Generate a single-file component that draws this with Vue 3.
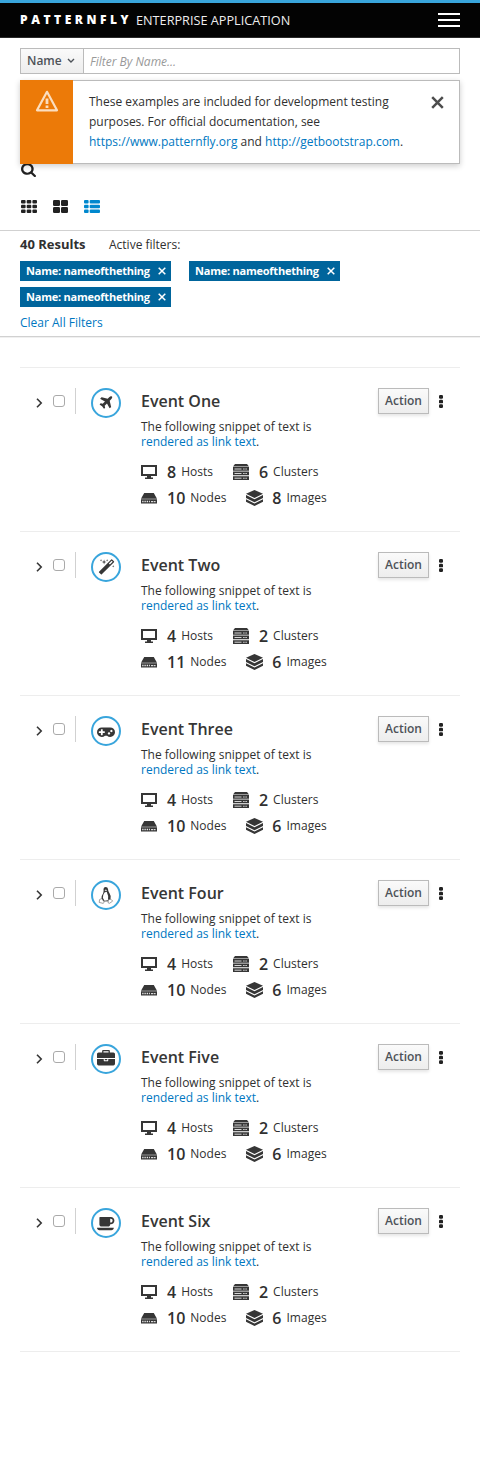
<script setup>
const plane = 'M1568 160q44 52 12 148t-108 172l-161 161 160 696q5 19-12 33l-128 96q-7 6-19 6-4 0-7-1-15-3-21-16l-279-508-259 259 53 194q5 17-8 31l-96 96q-9 9-23 9h-2q-15-2-24-13l-189-252-252-189q-11-7-13-23-1-13 9-25l96-97q9-9 23-9 6 0 8 1l194 53 259-259-508-279q-14-8-17-24-2-16 9-27l128-128q14-13 30-8l665 159 160-160q76-76 172-108t148 12z'
const magic = 'M1254 581l293-293-107-107-293 293zm447-293q0 27-18 45l-1286 1286q-18 18-45 18t-45-18l-198-198q-18-18-18-45t18-45l1286-1286q18-18 45-18t45 18l198 198q18 18 18 45zm-1351-190l98 30-98 30-30 98-30-98-98-30 98-30 30-98zm350 162l196 60-196 60-60 196-60-196-196-60 196-60 60-196zm930 478l98 30-98 30-30 98-30-98-98-30 98-30 30-98zm-640-640l98 30-98 30-30 98-30-98-98-30 98-30 30-98z'
const gamepad = 'M832 1088v-128q0-14-9-23t-23-9h-192v-192q0-14-9-23t-23-9h-128q-14 0-23 9t-9 23v192h-192q-14 0-23 9t-9 23v128q0 14 9 23t23 9h192v192q0 14 9 23t23 9h128q14 0 23-9t9-23v-192h192q14 0 23-9t9-23zm576 64q0-53-37.5-90.5t-90.5-37.5-90.5 37.5-37.5 90.5 37.5 90.5 90.5 37.5 90.5-37.5 37.5-90.5zm256-256q0-53-37.5-90.5t-90.5-37.5-90.5 37.5-37.5 90.5 37.5 90.5 90.5 37.5 90.5-37.5 37.5-90.5zm256 128q0 212-150 362t-362 150q-192 0-338-128h-220q-146 128-338 128-212 0-362-150t-150-362 150-362 362-150h896q212 0 362 150t150 362z'
const briefcase = 'M640 256h512v-128h-512v128zm1152 640v480q0 66-47 113t-113 47h-1472q-66 0-113-47t-47-113v-480h672v160q0 26 19 45t45 19h320q26 0 45-19t19-45v-160h672zm-768 0v128h-256v-128h256zm768-480v384h-1792v-384q0-66 47-113t113-47h352v-160q0-40 28-68t68-28h576q40 0 68 28t28 68v160h352q66 0 113 47t47 113z'
const coffee = 'M1664 640q0-80-56-136t-136-56h-64v384h64q80 0 136-56t56-136zm-1664 768h1792q0 106-75 181t-181 75h-1280q-106 0-181-75t-75-181zm1856-768q0 159-112.5 271.5t-271.5 112.5h-64v32q0 92-66 158t-158 66h-704q-92 0-158-66t-66-158v-736q0-26 19-45t45-19h1152q159 0 271.5 112.5t112.5 271.5z'

const events = [
  { name: 'Event One', path: plane, box: '0 0 1792 1792', w: 16, stats: [8, 6, 10, 8] },
  { name: 'Event Two', path: magic, box: '0 0 1792 1792', w: 17, stats: [4, 2, 11, 6] },
  { name: 'Event Three', path: gamepad, box: '0 0 1920 1792', w: 18, stats: [4, 2, 10, 6] },
  { name: 'Event Four', path: null, box: '0 0 18 18', w: 18, stats: [4, 2, 10, 6] },
  { name: 'Event Five', path: briefcase, box: '0 0 1792 1792', w: 18, stats: [4, 2, 10, 6] },
  { name: 'Event Six', path: coffee, box: '0 0 1920 1792', w: 18, stats: [4, 2, 10, 6] },
]
const filters = ['Name: nameofthething', 'Name: nameofthething', 'Name: nameofthething']
</script>

<template>
  <div class="page">
    <header class="navbar">
      <div class="brand"><b>PATTERNFLY</b><span>ENTERPRISE APPLICATION</span></div>
      <div class="burger"><i></i><i></i><i></i></div>
    </header>

    <section class="toolbar">
      <div class="filter">
        <div class="filter-type">Name
          <svg width="8" height="6" viewBox="0 0 8 6"><path d="M1 1l3 3 3-3" fill="none" stroke="#4d5258" stroke-width="1.4" /></svg>
        </div>
        <div class="filter-input">Filter By Name...</div>
      </div>
      <svg class="search" width="15" height="15" viewBox="64 0 1664 1792" preserveAspectRatio="none"><path fill="#222" d="M1216 832q0-185-131.500-316.500t-316.500-131.500-316.500 131.500-131.500 316.500 131.500 316.500 316.500 131.500 316.500-131.500 131.500-316.500zm512 832q0 52-38 90t-90 38q-54 0-90-38l-343-342q-179 124-399 124-143 0-273.500-55.500t-225-150-150-225-55.500-273.500 55.500-273.500 150-225 225-150 273.500-55.500 273.500 55.500 225 150 150 225 55.500 273.500q0 220-124 399l343 343q37 37 37 90z" /></svg>
      <div class="views">
        <svg width="16" height="13" viewBox="0 0 16 13" fill="#222">
          <template v-for="y in [0, 4.7, 9.4]" :key="y">
            <rect x="0" :y="y" width="4.600" height="3.600" rx="1" /><rect x="5.700" :y="y" width="4.600" height="3.600" rx="1" /><rect x="11.400" :y="y" width="4.600" height="3.600" rx="1" />
          </template>
        </svg>
        <svg width="15" height="13" viewBox="0 0 15 13" fill="#222">
          <rect width="7" height="6" rx="1.300" /><rect x="8" width="7" height="6" rx="1.300" /><rect y="7" width="7" height="6" rx="1.300" /><rect x="8" y="7" width="7" height="6" rx="1.300" />
        </svg>
        <svg width="16" height="13" viewBox="0 0 16 13" fill="#0088ce">
          <template v-for="y in [0, 4.7, 9.4]" :key="y">
            <rect x="0" :y="y" width="4.600" height="3.600" rx="1" /><rect x="5.700" :y="y" width="10.300" height="3.600" rx="1" />
          </template>
        </svg>
      </div>
      <div class="toast">
        <div class="toast-icon">
          <svg width="24" height="22" viewBox="0 0 24 22" fill="none" stroke="#fbdebf" stroke-width="2.200" stroke-linejoin="round">
            <path d="M12 1.800L22 20.300H2z" /><path d="M12 8.500v5.500M12 15.500v2.500" stroke-width="2.800" />
          </svg>
        </div>
        <p>These examples are included for development testing purposes. For official documentation, see <a>https://www.patternfly.org</a> and <a>http://getbootstrap.com</a>.</p>
        <svg class="close" width="13" height="13" viewBox="0 0 13 13"><path d="M1.200 1.200l10.600 10.600M11.800 1.200L1.200 11.800" stroke="#4d4d4d" stroke-width="2.500" /></svg>
      </div>
    </section>

    <section class="results">
      <div class="summary"><b>40 Results</b><span>Active filters:</span></div>
      <div class="tags">
        <span v-for="(f, i) in filters" :key="i" class="tag"><span class="tag-text">{{ f }}</span>
          <svg width="8" height="8" viewBox="0 0 8 8"><path d="M.7.7l6.600 6.600M7.300.7L.7 7.300" stroke="#fff" stroke-width="1.500" /></svg>
        </span>
      </div>
      <a class="clear">Clear All Filters</a>
    </section>

    <main class="list">
      <article v-for="e in events" :key="e.name" class="row">
        <svg class="chevron" width="7" height="10" viewBox="0 0 7 10"><path d="M1 .8L5.200 5 1 9.200" fill="none" stroke="#363636" stroke-width="1.600" /></svg>
        <div class="check"><i></i></div>
        <div class="circle">
          <svg :width="e.w" :height="e.w" :viewBox="e.box">
            <path v-if="e.path" :d="e.path" fill="#363636" />
            <g v-else>
              <path d="M6.500 3Q6.700.9 8.700.9T11 3Q11 5.400 12.500 7.200 14.400 9.800 13.500 13.300L12.500 15.300 6 15.500 4.500 12.500Q4.400 9.500 6.200 7.200 6.900 5.500 6.500 3z" fill="#363636" />
              <path d="M7.500 6.500L9.700 5.700Q11.600 9 11 14.200L7.500 14.800 5.900 12Q5.700 9 7.500 6.500z" fill="#fff" />
              <path d="M7.500 4.200l1.300-.7 1.300.8-1.300.9z" fill="#ddd" />
              <path d="M2.600 13.500l2-.9 2.600 3.300-.9 1.500-4.100-1zM11.300 13.700l2.500-.5 1.900 1.900-3.200 2.200-1.400-.5z" fill="#fff" stroke="#666" stroke-width=".6" />
            </g>
          </svg>
        </div>
        <div class="body">
          <h3>{{ e.name }}</h3>
          <p>The following snippet of text is <a>rendered as link text</a>.</p>
          <div class="stats">
            <div class="stat">
              <svg width="16" height="16" viewBox="0 0 16 16"><path fill="#363636" fill-rule="evenodd" d="M0 1h16v11h-6v1.500h2V15H4v-1.500h2V12H0zM2 3v7h12V3z" /></svg>
              <b>{{ e.stats[0] }}</b><span>Hosts</span>
            </div>
            <div class="stat">
              <svg width="16" height="16" viewBox="0 0 16 16">
                <path fill="#363636" d="M2 0h12l2 2.500H0zM0 3h16v3.700H0zM0 7.600h16v3.700H0zM0 12.200h16V16H0z" />
                <path stroke="#fff" stroke-width=".8" d="M1.500 5h7M1.500 9.500h7M1.500 14.200h7" /><path stroke="#fff" stroke-width="1.100" stroke-dasharray="1.200 1" d="M10.300 5h4.400M10.300 9.500h4.400M10.300 14.200h4.400" />
              </svg>
              <b>{{ e.stats[1] }}</b><span>Clusters</span>
            </div>
          </div>
          <div class="stats">
            <div class="stat">
              <svg width="16" height="16" viewBox="0 0 16 16"><path fill="#363636" d="M3.200 3h9.600L16 8.800H0zM0 9.300h16v4.200H0z" /><path stroke="#fff" stroke-width="1.300" stroke-dasharray="1.200 1" d="M1.300 11.500h7.500" /><path stroke="#fff" stroke-width="1" stroke-dasharray="2 .6" d="M10 11.700h4.600" /></svg>
              <b>{{ e.stats[2] }}</b><span>Nodes</span>
            </div>
            <div class="stat">
              <svg width="17" height="16" viewBox="0 0 17 16" fill="#363636"><path d="M8.500 0L17 3.700 8.500 8 0 3.700zM0 5l8.500 4.300L17 5v3l-8.500 4.300L0 8zM0 9.200l8.500 4.300L17 9.200v2.500L8.500 16 0 11.700z" /></svg>
              <b class="tight">{{ e.stats[3] }}</b><span>Images</span>
            </div>
          </div>
        </div>
        <div class="actions">
          <div class="btn">Action</div>
          <svg class="kebab" width="4" height="13" viewBox="0 0 4 13" fill="#222"><rect width="4" height="3.700" rx="1.200" /><rect y="4.650" width="4" height="3.700" rx="1.200" /><rect y="9.300" width="4" height="3.700" rx="1.200" /></svg>
        </div>
      </article>
    </main>
  </div>
</template>

<style>
body { background: #fff; }
</style>

<style scoped>
* { box-sizing: border-box; }
.page { width: 480px; height: 1472px; font: 12px/20px "Open Sans", sans-serif; color: #303030; }
a { color: #0077c1; }
svg { display: block; flex: none; }
.navbar { height: 38px; border-top: 3px solid #39a5dc; border-bottom: 1px solid #292929; background: #030303; display: flex; align-items: center; justify-content: space-between; padding: 0 20px; color: #fff; }
.brand { display: flex; align-items: center; white-space: nowrap; }
.brand b { width: 116px; font-weight: 800; font-size: 12px; letter-spacing: 3.550px; }
.brand span { font-size: 12.700px; font-weight: 400; color: #eee; }
.burger { display: flex; flex-direction: column; gap: 4px; }
.burger i { width: 22px; height: 2px; background: #fff; }

.toolbar { position: relative; height: 193px; padding: 10px 20px 0; border-bottom: 1px solid #d1d1d1; }
.filter { display: flex; height: 26px; border: 1px solid #bbb; }
.filter-type { width: 63px; border-right: 1px solid #bbb; background: linear-gradient(#fafafa, #ededed); display: flex; align-items: center; gap: 5px; padding-left: 6px; font-weight: 600; color: #4d5258; }
.filter-input { padding: 3px 6px 0; font-style: italic; color: #999; }
.search { margin: 88px 0 0 1px; }
.views { display: flex; align-items: center; margin: 23px 0 0 1px; gap: 16px; }
.toast { position: absolute; left: 20px; top: 42px; width: 440px; height: 84px; background: #fff; border: 1px solid #bbb; box-shadow: 0 2px 6px rgba(3, 3, 3, .2); display: flex; }
.toast-icon { width: 53px; margin: -1px 0 -1px -1px; background: #ec7a08; display: flex; justify-content: center; padding-top: 10px; }
.toast p { margin: 11px 0 0 16px; width: 325px; }
.close { margin: 15px 0 0 17px; }

.results { height: 106px; padding: 4px 20px 0; border-bottom: 1px solid #d1d1d1; box-shadow: 0 1px 0 #f0f0f0; }
.summary { display: flex; height: 20px; }
.summary b { width: 89px; font-weight: 700; font-size: 13px; line-height: 18px; }
.tags { display: flex; flex-wrap: wrap; gap: 6px 18px; margin-top: 6px; }
.tag { display: flex; align-items: center; width: 151px; height: 20px; padding-left: 6px; background: #00659c; color: #fff; font-size: 11px; font-weight: 700; white-space: nowrap; }
.tag-text { width: 132px; letter-spacing: -.23px; }
.tag svg { margin-top: -1px; }
.clear { display: block; margin-top: 6px; }

.list { margin: 30px 20px 0; border-top: 1px solid #ededed; }
.row { height: 164px; border-bottom: 1px solid #ededed; display: flex; align-items: flex-start; padding-top: 20px; }
.chevron { margin: 9.500px .5px 0 15.500px; }
.check { width: 33px; height: 26px; border-right: 1px solid #d1d1d1; padding: 7px 0 0 10px; }
.check i { display: block; width: 12px; height: 12px; border: 1px solid #aaa; border-radius: 3px; background: #fff; }
.circle { flex: none; width: 30px; height: 30px; margin-left: 15px; border: 2px solid #39a5dc; border-radius: 50%; display: flex; align-items: center; justify-content: center; }
.body { margin-left: 20px; width: 190px; }
h3 { margin: 3px 0 0; font-size: 16px; line-height: 20px; font-weight: 600; color: #363636; white-space: nowrap; }
.body p { margin: 8px 0 0; line-height: 15px; }
.stats { display: flex; gap: 20px; height: 26px; align-items: center; }
.body p + .stats { margin-top: 10px; }
.stat { display: flex; align-items: center; white-space: nowrap; }
.stat b { font-size: 16px; font-weight: 600; margin: 0 5px 0 10px; }
.stat b.tight { margin-left: 9px; }
.actions { display: flex; align-items: center; margin-left: auto; }
.btn { width: 51px; height: 26px; border: 1px solid #bbb; background: linear-gradient(#fafafa, #ededed); box-shadow: 0 2px 3px rgba(3, 3, 3, .1); text-align: center; line-height: 24px; font-weight: 600; color: #4d5258; }
.kebab { margin: 0 17px 0 10px; }
</style>
